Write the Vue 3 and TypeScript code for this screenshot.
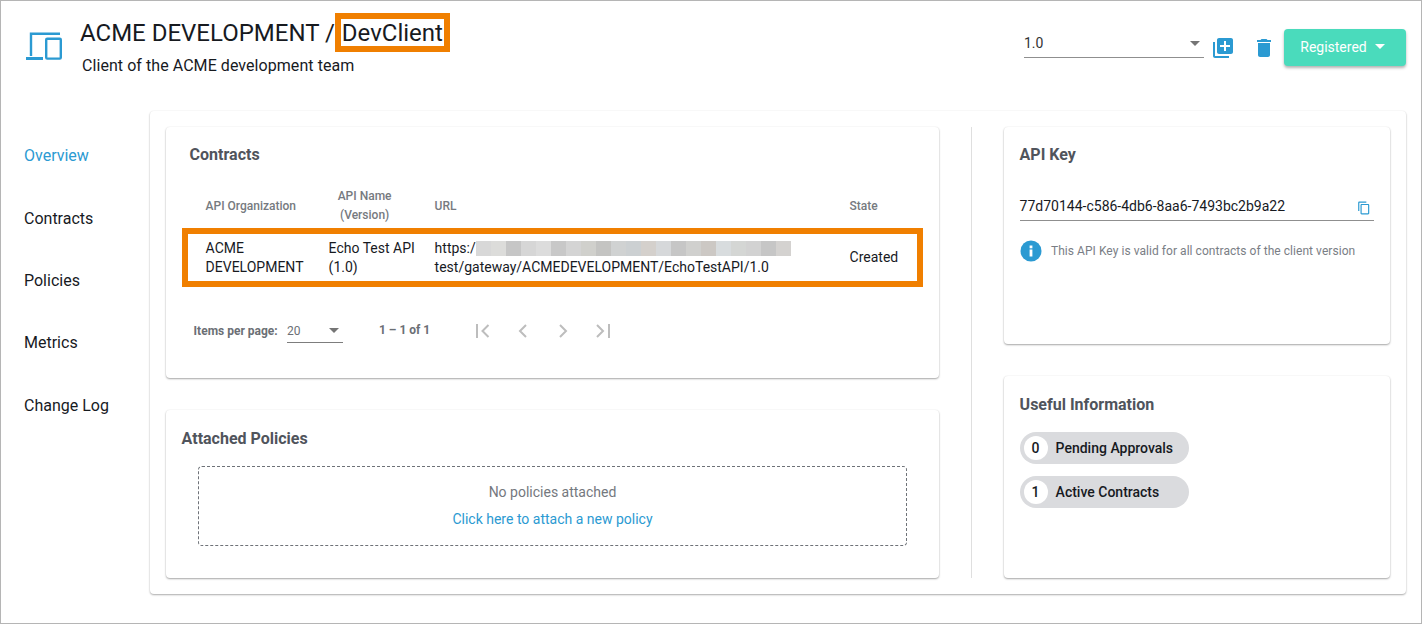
<script setup lang="ts">
const navItems: string[] = ['Overview', 'Contracts', 'Policies', 'Metrics', 'Change Log']
const blur: string[] = ['#d8d8d8','#dcdcda','#c6c6c6','#d6d6d6','#dcdcdc','#c8c8c8','#d4d4d4','#d0d0cc','#c4c4c2','#d0d2d2','#ccd0d2','#d4d0cc','#d6d8da','#c6c6c6','#d0d0ce','#ccc8c4','#d8dcde','#d4d6d4','#d2d2d2','#c6c6c6','#d4d2d0']
</script>

<template>
  <div class="page">
    <header class="head">
      <svg class="client-icon" viewBox="0 0 36 28" width="36" height="28" fill="none" stroke="#2b9ad2" stroke-width="2.4">
        <path d="M5 24V1.800h29" />
        <path d="M0 26.500h17" stroke-width="3" />
        <rect x="20.200" y="6.700" width="14.600" height="19.900" rx="1" />
      </svg>
      <div class="titles">
        <h1 class="title">ACME DEVELOPMENT / <span class="mark">DevClient</span></h1>
        <p class="sub">Client of the ACME development team</p>
      </div>
      <div class="actions">
        <div class="version"><span>1.0</span><i class="caret gray"></i></div>
        <svg class="act-a" width="24" height="24" viewBox="0 0 24 24" fill="#2b9ad2"><path d="M4 6H2v14c0 1.100.9 2 2 2h14v-2H4V6zm16-4H8c-1.100 0-2 .9-2 2v12c0 1.100.9 2 2 2h12c1.100 0 2-.9 2-2V4c0-1.100-.9-2-2-2zm-1 9h-4v4h-2v-4H9V9h4V5h2v4h4v2z"/></svg>
        <svg class="act-b" width="24" height="24" viewBox="0 0 24 24" fill="#2b9ad2"><path d="M6 19c0 1.100.9 2 2 2h8c1.100 0 2-.9 2-2V7H6v12zM19 4h-3.500l-1-1h-5l-1 1H5v2h14V4z"/></svg>
        <button class="status">Registered<i class="caret white"></i></button>
      </div>
    </header>

    <div class="body">
      <nav class="nav">
        <a v-for="(n, i) in navItems" :key="n" :class="{ active: i === 0 }">{{ n }}</a>
      </nav>
      <main class="outer">
        <div class="left">
          <section class="card contracts">
            <h2 class="ctitle">Contracts</h2>
            <div class="grid thead">
              <span>API Organization</span>
              <span class="center">API Name<br />(Version)</span>
              <span>URL</span>
              <span>State</span>
            </div>
            <div class="grid trow">
              <span>ACME<br />DEVELOPMENT</span>
              <span>Echo Test API<br />(1.0)</span>
              <span>
                <span class="url1">https:/<span class="blur"><i v-for="(c, i) in blur" :key="i" :style="{ background: c }"></i></span></span><br />test/gateway/ACMEDEVELOPMENT/EchoTestAPI/1.0
              </span>
              <span>Created</span>
            </div>
            <div class="pager">
              <span class="ipp">Items per page:</span>
              <div class="ppsel"><span>20</span><i class="caret gray"></i></div>
              <span class="range">1 – 1 of 1</span>
              <div class="pbtns">
                <svg width="24" height="24" viewBox="0 0 24 24" fill="none" stroke="#bdbdbd" stroke-width="2"><path d="M6 5v14M17.500 6l-6 6 6 6"/></svg>
                <svg width="24" height="24" viewBox="0 0 24 24" fill="none" stroke="#bdbdbd" stroke-width="2"><path d="M15 6l-6 6 6 6"/></svg>
                <svg width="24" height="24" viewBox="0 0 24 24" fill="none" stroke="#bdbdbd" stroke-width="2"><path d="M9 6l6 6-6 6"/></svg>
                <svg width="24" height="24" viewBox="0 0 24 24" fill="none" stroke="#bdbdbd" stroke-width="2"><path d="M18 5v14M6 6l6 6-6 6"/></svg>
              </div>
            </div>
          </section>
          <section class="card policies">
            <h2 class="ctitle">Attached Policies</h2>
            <div class="dashed">
              <span class="none">No policies attached</span>
              <a class="link">Click here to attach a new policy</a>
            </div>
          </section>
        </div>
        <div class="divider"></div>
        <div class="right">
          <section class="card apikey">
            <h2 class="ctitle">API Key</h2>
            <div class="keyfield">
              <span>77d70144-c586-4db6-8aa6-7493bc2b9a22</span>
              <svg width="14" height="14" viewBox="0 0 24 24" fill="#2b9ad2"><path d="M16 1H4c-1.100 0-2 .9-2 2v14h2V3h12V1zm3 4H8c-1.100 0-2 .9-2 2v14c0 1.100.9 2 2 2h11c1.100 0 2-.9 2-2V7c0-1.100-.9-2-2-2zm0 16H8V7h11v14z"/></svg>
            </div>
            <div class="hint">
              <svg width="22" height="22" viewBox="0 0 22 22"><circle cx="11" cy="11" r="10.500" fill="#2b9ad2"/><rect x="9.600" y="9.500" width="2.800" height="7" fill="#fff"/><rect x="9.600" y="5.500" width="2.800" height="2.800" fill="#fff"/></svg>
              <span>This API Key is valid for all contracts of the client version</span>
            </div>
          </section>
          <section class="card useful">
            <h2 class="ctitle">Useful Information</h2>
            <div class="chip"><b>0</b><span>Pending Approvals</span></div>
            <div class="chip"><b>1</b><span>Active Contracts</span></div>
          </section>
        </div>
      </main>
    </div>
  </div>
</template>

<style>
html, body { margin: 0; background: #fff; }
</style>

<style scoped>
.page {
  box-sizing: border-box;
  width: 1422px;
  height: 624px;
  border: 1px solid #b5b5b5;
  overflow: hidden;
  font-family: Roboto, "Liberation Sans", sans-serif;
  color: #171a1f;
  background: #fff;
}
.head { display: flex; height: 110px; box-sizing: border-box; }
.client-icon { margin: 31px 0 0 25px; flex: none; }
.titles { margin-left: 18px; }
.title { margin: 14px 0 0; font-size: 24px; font-weight: 400; line-height: 36px; height: 36px; }
.mark {
  display: inline-block;
  box-sizing: border-box;
  height: 39px;
  line-height: 27px;
  padding: 1px 1px 0;
  margin: -6px 0 -6px -6px;
  border: 6px solid #f07f00;
  vertical-align: baseline;
}
.sub { margin: 5px 0 0 2px; font-size: 16px; line-height: 19px; letter-spacing: .06px; }
.actions { margin-left: auto; display: flex; align-items: flex-start; padding-right: 15px; }
.version {
  box-sizing: border-box; width: 180px; height: 27px; margin-top: 30px;
  border-bottom: 1px solid #8f8f8f;
  display: flex; justify-content: space-between; align-items: center;
  font-size: 14px; line-height: 24px; color: #333;
  padding: 0 4px 2px 0;
}
.act-a { margin: 35px 0 0 7px; }
.act-b { margin: 35px 0 0 17px; }
.status {
  width: 122px; height: 37px; margin: 28px 0 0 8px;
  background: #4adbbc; border: 0; border-radius: 4px; color: #fff;
  font: 14px Roboto, sans-serif;
  box-shadow: 0 2px 3px rgba(0,0,0,.3);
  display: flex; align-items: center; justify-content: center; gap: 8px;
  padding: 0 5px 2px 0;
}
.caret { display: inline-block; width: 0; height: 0; border-left: 5px solid transparent; border-right: 5px solid transparent; border-top: 5px solid; }
.caret.gray { color: #757575; }
.caret.white { color: #fff; }
.body { display: flex; }
.nav { width: 149px; flex: none; padding: 28.15px 0 0 23px; box-sizing: border-box; display: flex; flex-direction: column; }
.nav a { font-size: 16px; height: 62.4px; flex: none; line-height: 33px; color: #171a1f; }
.nav a.active { color: #2b9ad2; }
.outer {
  width: 1256px; height: 483px; box-sizing: border-box;
  padding: 16px; display: flex;
  background: #fff; border-radius: 4px;
  box-shadow: 0 1px 2px rgba(0,0,0,.32), 0 0 2px rgba(0,0,0,.05);
}
.left { width: 773px; display: flex; flex-direction: column; gap: 32px; }
.divider { width: 1px; background: #dfdfdf; margin: 0 32px; }
.right { width: 386px; display: flex; flex-direction: column; gap: 32px; }
.card {
  box-sizing: border-box; background: #fff; border-radius: 4px;
  box-shadow: 0 1px 2px rgba(0,0,0,.35), 0 0 2px rgba(0,0,0,.06);
}
.ctitle { margin: 0; font-size: 16px; font-weight: 700; line-height: 20px; color: #50545c; }
.contracts { height: 251px; padding: 18px 16.4px 0 15.6px; }
.contracts .ctitle { padding-left: 8px; }
.grid { display: grid; grid-template-columns: 123px 106px 415px 1fr; padding-left: 18px; }
.thead { margin-top: 20px; height: 42px; padding-left: 24px; align-items: center; font-size: 12px; font-weight: 500; line-height: 19px; color: #767a80; }
.center { text-align: center; width: 72px; }
.trow { box-sizing: border-box; height: 59px; margin-top: 1px; border: 6px solid #f07f00; font-size: 14px; line-height: 19px; align-items: center; color: #171a1f; }
.url1 { white-space: nowrap; }
.blur { display: inline-flex; vertical-align: -3px; height: 15px; }
.blur i { width: 15px; height: 15px; display: block; }
.pager { display: flex; align-items: center; margin-top: 29px; height: 30px; padding-left: 12px; font-size: 12px; color: #6b6f75; font-weight: 500; }
.ipp { width: 93.4px; color: #6b6f75; font-weight: 700; }
.ppsel { box-sizing: border-box; width: 56px; height: 24px; border-bottom: 1px solid #7d7d7d; display: flex; align-items: center; justify-content: space-between; padding: 0 4px 0 0; font-weight: 400; }
.range { margin-left: 36px; font-weight: 700; margin-top: -2px; }
.pbtns { display: flex; gap: 16px; margin-left: 41px; }
.policies { height: 168px; padding: 19px 16.4px 0 15.6px; }
.dashed {
  box-sizing: border-box; width: 709px; height: 80px; margin: 17px 0 0 16.4px;
  border: 1px dashed #6e7278; border-radius: 4px;
  display: flex; flex-direction: column; align-items: center; padding-top: 16px; font-size: 14px; line-height: 18px; gap: 9px;
}
.none { color: #74787e; }
.link { color: #2b9ad2; }
.apikey { height: 217px; padding: 18px 16.4px 0 15.6px; }
.keyfield {
  margin-top: 27px; height: 29px; border-bottom: 1px solid #8f8f8f; margin-right: 0;
  display: flex; justify-content: space-between; align-items: center;
  font-size: 14px; padding: 0 3px 0 0; box-sizing: border-box; width: 354.4px;
}
.keyfield svg { margin-top: 4px; }
.hint { display: flex; align-items: center; gap: 9px; margin-top: 19px; padding-left: .4px; font-size: 12px; letter-spacing: .05px; color: #7a7e85; }
.useful { height: 202px; padding: 19px 16.4px 0 15.6px; }
.chip {
  box-sizing: border-box; width: 169px; height: 32px; margin-top: 12px; padding: 4px;
  border-radius: 16px; background: #dadbde;
  display: flex; align-items: center; font-size: 14px; font-weight: 500; color: #171a1f;
}
.useful .ctitle + .chip { margin-top: 17px; }
.chip b { width: 24px; height: 24px; border-radius: 50%; background: #fff; display: flex; align-items: center; justify-content: center; font-weight: 500; margin-right: 8px; }
</style>
